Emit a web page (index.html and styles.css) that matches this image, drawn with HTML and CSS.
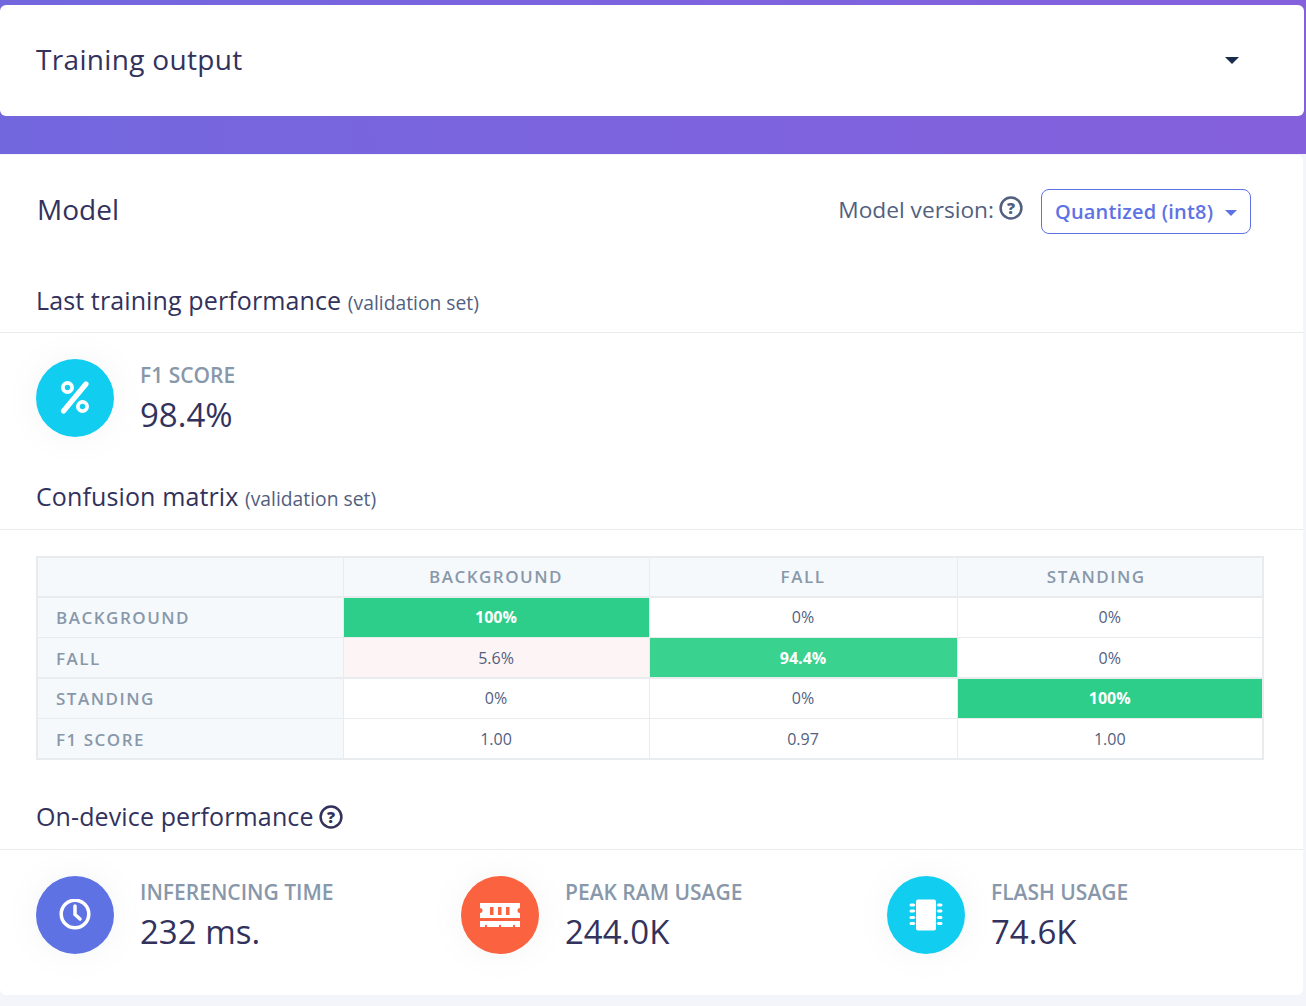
FILE: index.html
```html
<!DOCTYPE html>
<html lang="en">
<head>
  <meta charset="UTF-8">
  <title>Training output</title>
  <link rel="stylesheet" href="styles.css">
</head>
<body>
  <div class="hero">
    <div class="card-top">
      <h1>Training output</h1>
      <span class="caret caret-dark"></span>
    </div>
  </div>

  <div class="card-main">
    <div class="model-head">
      <h2>Model</h2>
      <div class="version">
        <span class="version-label">Model version:</span>
        <svg class="help help-grey" viewBox="0 0 24 24"><circle cx="12" cy="12" r="10.4"/><text x="12" y="17.6" text-anchor="middle">?</text></svg>
        <button class="version-btn">Quantized (int8)<span class="caret caret-blue"></span></button>
      </div>
    </div>

    <h3 class="sec-title sec-perf">Last training performance <small>(validation set)</small></h3>
    <div class="stats stats-f1">
      <div class="stat">
        <div class="circle cyan">
          <svg class="percent" viewBox="0 0 32 36" width="32" height="36"><circle cx="8.500" cy="7.500" r="4.600"/><circle cx="23.500" cy="26.500" r="4.600"/><path d="M27 4 4.500 31"/></svg>
        </div>
        <div class="stat-text">
          <div class="stat-label">F1 SCORE</div>
          <div class="stat-value">98.4%</div>
        </div>
      </div>
    </div>

    <h3 class="sec-title sec-matrix">Confusion matrix <small>(validation set)</small></h3>
    <div class="matrix-wrap">
      <table class="matrix">
        <tr class="head-row"><th></th><th>BACKGROUND</th><th>FALL</th><th class="head-shift">STANDING</th></tr>
        <tr><th>BACKGROUND</th><td class="good">100%</td><td>0%</td><td>0%</td></tr>
        <tr class="row-thick"><th>FALL</th><td class="bad">5.6%</td><td class="good good-mid">94.4%</td><td>0%</td></tr>
        <tr><th>STANDING</th><td>0%</td><td>0%</td><td class="good">100%</td></tr>
        <tr class="row-last"><th>F1 SCORE</th><td>1.00</td><td>0.97</td><td>1.00</td></tr>
      </table>
    </div>

    <h3 class="sec-title sec-device">On-device performance
      <svg class="help help-dark" viewBox="0 0 24 24"><circle cx="12" cy="12" r="10.4"/><text x="12" y="17.6" text-anchor="middle">?</text></svg>
    </h3>
    <div class="stats stats-device">
      <div class="stat">
        <div class="circle indigo">
          <svg viewBox="0 0 32 32" width="32" height="32"><circle cx="16" cy="15" r="13.800"/><path d="M16 7v8.500l5 4.500"/></svg>
        </div>
        <div class="stat-text">
          <div class="stat-label">INFERENCING TIME</div>
          <div class="stat-value">232 ms.</div>
        </div>
      </div>
      <div class="stat">
        <div class="circle orange">
          <svg class="solid" viewBox="0 0 42 24" width="42" height="24"><path fill-rule="evenodd" d="M1 0h40v5a2.500 2.500 0 0 0 0 5v5H1v-5a2.500 2.500 0 0 0 0-5zM11 4v8h3.500V4zM19 4v8h3.500V4zM27 4v8h3.500V4z"/><path d="M1 18h40v6h-5v-2h-2v2H22v-2h-2v2H8v-2H6v2H1z"/></svg>
        </div>
        <div class="stat-text">
          <div class="stat-label">PEAK RAM USAGE</div>
          <div class="stat-value">244.0K</div>
        </div>
      </div>
      <div class="stat">
        <div class="circle cyan">
          <svg class="solid" viewBox="0 0 34 32" width="34" height="32"><rect x="7" y="0.500" width="20" height="31" rx="2"/><path d="M2 4.500h3l1.500 1.500L5 7.500H2a1.500 1.500 0 0 1 0-3zM2 10.500h3l1.500 1.500L5 13.500H2a1.500 1.500 0 0 1 0-3zM2 17h3l1.500 1.500L5 20H2a1.500 1.500 0 0 1 0-3zM2 23h3l1.500 1.500L5 26H2a1.500 1.500 0 0 1 0-3zM32 4.500h-3L27.500 6 29 7.500h3a1.500 1.500 0 0 0 0-3zM32 10.500h-3L27.500 12l1.500 1.500h3a1.500 1.500 0 0 0 0-3zM32 17h-3l-1.500 1.500L29 20h3a1.500 1.500 0 0 0 0-3zM32 23h-3l-1.500 1.500L29 26h3a1.500 1.500 0 0 0 0-3z"/></svg>
        </div>
        <div class="stat-text">
          <div class="stat-label">FLASH USAGE</div>
          <div class="stat-value">74.6K</div>
        </div>
      </div>
    </div>
  </div>
</body>
</html>
```

FILE: styles.css
```css
* {
  box-sizing: border-box;
}
body {
  margin: 0;
  height: 1006px;
  overflow: hidden;
  background-color: #f3f5fa;
  font-family: "Open Sans", sans-serif;
  color: #32325d;
}
h1, h2, h3 {
  margin: 0;
  font-weight: 500;
}

.hero {
  height: 154px;
  padding: 5px 2px 0 0;
  background: linear-gradient(87deg, #7367de 0, #8560dd 100%);
}
.card-top {
  display: flex;
  align-items: center;
  justify-content: space-between;
  height: 111px;
  padding: 0 65px 0 36px;
  background-color: #fff;
  border-radius: 6px;
}
.card-top h1 {
  font-size: 28px;
  line-height: 34px;
  letter-spacing: .33px;
  margin-top: -4px;
}
.caret {
  display: inline-block;
  border-style: solid;
  border-color: transparent;
  border-width: 7px 7px 0;
}
.caret-dark {
  border-top-color: #172b4d;
}
.caret-blue {
  border-width: 6px 6px 0;
  border-top-color: #5e72e4;
  margin: 3px 0 0 12px;
}

.card-main {
  height: 840px;
  margin: 1px 3px 0 0;
  background-color: #fff;
  border-radius: 0 6px 6px 6px;
}
.model-head {
  display: flex;
  align-items: center;
  justify-content: space-between;
  height: 109px;
  padding: 0 52px 0 36px;
}
.model-head h2 {
  font-size: 28px;
  margin: -1px 0 0 1px;
}
.version {
  display: flex;
  align-items: center;
}
.version-label {
  font-size: 22.700px;
  color: #525f7f;
  margin-top: -1px;
}
.help {
  fill: none;
  stroke-width: 2.500;
}
.help text {
  stroke: none;
  font-size: 16px;
  font-weight: 800;
  font-family: "Open Sans", sans-serif;
}
.help-grey {
  width: 24px;
  height: 24px;
  margin: -3px 0 0 5px;
  stroke: #525f7f;
}
.help-grey text {
  fill: #525f7f;
}
.help-dark {
  width: 24px;
  height: 24px;
  margin-left: -1px;
  vertical-align: -3px;
  stroke: #32325d;
}
.help-dark text {
  fill: #32325d;
}
.version-btn {
  display: flex;
  align-items: center;
  width: 210px;
  height: 45px;
  margin: 3px 0 0 18px;
  padding: 0 0 0 13px;
  background-color: #fff;
  border: 1px solid #5e72e4;
  border-radius: 8px;
  font-family: "Open Sans", sans-serif;
  font-size: 20px;
  font-weight: 600;
  letter-spacing: .18px;
  color: #5e72e4;
}

.sec-title {
  font-size: 25px;
  line-height: 32px;
  letter-spacing: .12px;
  padding: 0 36px 14px;
  border-bottom: 1px solid #e9ecef;
}
.sec-title small {
  font-size: 19.300px;
  font-weight: 400;
  letter-spacing: 0;
  color: #525f7f;
}
.sec-perf {
  margin-top: 20px;
  padding-bottom: 13px;
}
.stats {
  display: flex;
  padding: 0 36px;
}
.stats-f1 {
  height: 147px;
  padding-top: 26px;
}
.stats-device {
  padding-top: 26px;
}
.stat {
  display: flex;
  flex: 0 0 425px;
}
.stat:nth-child(2) {
  flex-basis: 426px;
}
.circle {
  display: flex;
  align-items: center;
  justify-content: center;
  width: 78px;
  height: 78px;
  border-radius: 50%;
  box-shadow: 0 0 30px rgba(136, 152, 170, .1);
}
.circle svg {
  fill: none;
  stroke: #fff;
  stroke-width: 3.500;
  stroke-linecap: round;
}
.circle svg.percent {
  stroke-width: 3.800;
}
.circle svg.percent path {
  stroke-width: 5.200;
}
.circle svg.solid {
  fill: #fff;
  stroke: none;
}
.cyan {
  background-color: #11cdef;
}
.indigo {
  background-color: #5e72e4;
}
.orange {
  background-color: #fb6340;
}
.stat-text {
  margin-left: 26px;
}
.stat-label {
  font-size: 21px;
  line-height: 27px;
  font-weight: 600;
  color: #8898aa;
  margin-top: 3px;
}
.stat-value {
  font-size: 33px;
  line-height: 44px;
  font-weight: 500;
  color: #32325d;
  margin-top: 4px;
}

.matrix-wrap {
  padding: 26px 39px 0 36px;
}
.matrix {
  width: 100%;
  table-layout: fixed;
  border-collapse: collapse;
  border: 2px solid #e9ecef;
}
.matrix th, .matrix td {
  height: 40px;
  padding: 0;
  border: 1px solid #e9ecef;
  font-size: 16px;
  text-align: center;
  color: #525f7f;
}
.matrix th {
  background-color: #f6f9fc;
  font-size: 17px;
  font-weight: 600;
  letter-spacing: 1.500px;
  color: #8898aa;
}
.matrix tr > th:first-child {
  text-align: left;
  padding-left: 18px;
}
.head-row th {
  width: 306px;
  padding-bottom: 2px;
  border-bottom-width: 2px;
}
.head-row th:nth-child(3) {
  width: 308px;
}
.matrix .head-shift {
  padding-right: 27px;
}
.row-thick th, .row-thick td {
  height: 41px;
  padding-top: 2px;
  border-bottom-width: 2px;
}
.row-last th, .row-last td {
  height: 41px;
  padding-top: 2px;
}
.matrix .good {
  background-color: #2dce89;
  color: #fff;
  font-weight: 700;
}
.matrix .good-mid {
  background-color: #3ad28f;
}
.matrix .bad {
  background-color: #fdf4f5;
}

.sec-device {
  margin-top: 40px;
  padding-bottom: 17px;
}
```
